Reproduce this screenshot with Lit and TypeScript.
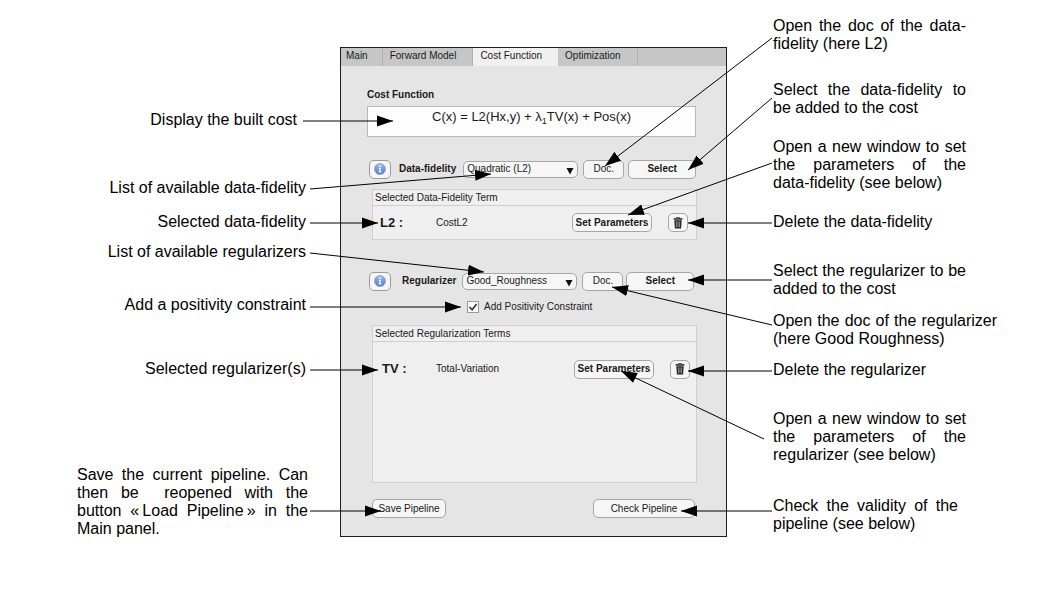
import { LitElement, html, svg, css } from "lit";
import { customElement, property } from "lit/decorators.js";

type Note = { gap: number; kind: string; text: unknown };
type Leader = [number, number, number, number];

const leftNotes: Note[] = [
  { gap: 111, kind: "line inset", text: "Display the built cost" },
  { gap: 50, kind: "line", text: "List of available data-fidelity" },
  { gap: 16, kind: "line", text: "Selected data-fidelity" },
  { gap: 12, kind: "line", text: "List of available regularizers" },
  { gap: 35, kind: "line", text: "Add a positivity constraint" },
  { gap: 46, kind: "line", text: "Selected regularizer(s)" },
  {
    gap: 88,
    kind: "para wide",
    text: "Save the current pipeline. Can then be \u00a0reopened with the button «\u202fLoad Pipeline\u202f» in the Main panel.",
  },
];

const rightNotes: Note[] = [
  { gap: 17, kind: "para", text: "Open the doc of the data-fidelity (here L2)" },
  { gap: 28, kind: "para", text: "Select the data-fidelity to be added to the cost" },
  {
    gap: 21,
    kind: "para",
    text: html`Open a new window to set the parameters of the <span class="whole">data-fidelity</span> (see below)`,
  },
  { gap: 21, kind: "line", text: "Delete the data-fidelity" },
  { gap: 31, kind: "para", text: "Select the regularizer to be added to the cost" },
  { gap: 14, kind: "para medium", text: "Open the doc of the regularizer (here Good Roughness)" },
  { gap: 13, kind: "line", text: "Delete the regularizer" },
  { gap: 31, kind: "para", text: "Open a new window to set the parameters of the regularizer (see below)" },
  { gap: 33, kind: "para slim", text: "Check the validity of the pipeline (see below)" },
];

const leaders: Leader[] = [
  [303, 121, 393, 121],
  [310, 189, 491, 174],
  [310, 223, 378, 223],
  [310, 253, 484, 272],
  [310, 307, 461, 307],
  [310, 370, 378, 370],
  [310, 511, 381, 511],
  [772, 38, 605, 166],
  [772, 98, 688, 170],
  [772, 163, 628, 215],
  [772, 223, 688, 223],
  [772, 280, 688, 280],
  [772, 325, 612, 287],
  [772, 371, 688, 371],
  [764, 439, 621, 371],
  [772, 511, 681, 511],
];

@customElement("callout-notes")
class CalloutNotes extends LitElement {
  @property({ attribute: false }) notes: Note[] = [];

  static styles = css`
    :host {
      display: flex;
      flex-direction: column;
      align-items: var(--notes-align, flex-start);
      font-size: 16px;
      line-height: 18px;
      color: #000;
    }
    .note { margin: 0; }
    .line { padding-right: 2px; }
    .inset { padding-right: 11px; }
    .para { width: 193px; text-align: justify; }
    .wide { width: 231px; }
    .medium { width: 224px; }
    .slim { width: 185px; }
    .whole { white-space: nowrap; }
  `;

  render() {
    return this.notes.map(
      (n) => html`<p class="note ${n.kind}" style="margin-top:${n.gap}px">${n.text}</p>`
    );
  }
}

const infoIcon = svg`<svg width="12" height="12" viewBox="0 0 12 12" aria-hidden="true">
  <defs><linearGradient id="g" x1="0" y1="0" x2="0" y2="1">
    <stop offset="0" stop-color="#9db8ea"/><stop offset="1" stop-color="#4f7bd0"/></linearGradient></defs>
  <circle cx="6" cy="6" r="5.6" fill="url(#g)" stroke="#7c9adb" stroke-width=".6"/>
  <circle cx="6" cy="3.2" r="1" fill="#fff"/>
  <path d="M4.7 5h2v3.6h.7v.9H4.6v-.9h.7V5.9h-.6z" fill="#fff"/></svg>`;

const trashIcon = svg`<svg width="10" height="12" viewBox="0 0 10 12" aria-hidden="true">
  <path d="M3.4 1.2V.4h3.2v.8" fill="none" stroke="#333" stroke-width=".8"/>
  <path d="M.6 1.2h8.8v1.5H.6z" fill="#222"/>
  <path d="M1.3 3.3h7.4L8.1 11.4H1.9z" fill="#222"/>
  <path d="M3.3 4.4l.2 5.8M5 4.4v5.8M6.7 4.4l-.2 5.8" stroke="#bbb" stroke-width=".7" fill="none"/></svg>`;

@customElement("cost-panel")
class CostPanel extends LitElement {
  static styles = css`
    :host {
      display: block;
      box-sizing: border-box;
      height: 100%;
      border: 1px solid #1c1c1c;
      background: #e5e5e5;
      color: #1a1a1a;
      font-size: 10px;
      line-height: 12px;
    }
    * { box-sizing: border-box; }
    .tabs { display: flex; height: 18px; background: #c6c6c6; }
    .tab {
      border: 0;
      border-right: 1px solid #b0b0b0;
      background: none;
      font: inherit;
      color: inherit;
      padding: 0 16px 2px 7px;
      white-space: nowrap;
    }
    .tab.first { padding: 0 14px 2px 5px; }
    .tab.on { padding-right: 15px; background: #f0f0f0; border-right-color: #f0f0f0; }
    .body { display: flex; flex-direction: column; padding: 23px 29px 0 26px; }
    h2 { margin: 0; font-size: 10px; line-height: 12px; }
    .formula {
      display: block;
      height: 31px;
      margin: 5px 1px 0 0;
      padding-top: 3px;
      border: 1px solid #b9b9b9;
      background: #fdfdfd;
      font-size: 13px;
      line-height: 14px;
      text-align: center;
    }
    sub { font-size: 9px; line-height: 0; vertical-align: -3px; }
    .row { display: flex; align-items: center; height: 20px; margin: 22px 1px 0 2px; }
    .row label { font-weight: bold; white-space: nowrap; }
    .btn {
      display: flex;
      align-items: center;
      justify-content: center;
      height: 19px;
      padding: 0;
      border: 1px solid #a6a6a6;
      border-radius: 5px;
      background: #f6f6f6;
      font: inherit;
      color: inherit;
      white-space: nowrap;
    }
    .strong { font-weight: bold; }
    .info { width: 22px; margin-right: 8px; border-color: #9a9a9a; }
    .info.far { margin-right: 11px; }
    .pick { position: relative; display: flex; width: 115px; margin: 0 5px 0 7px; }
    .pick.near { margin: 0 5px 0 6px; }
    select {
      appearance: none;
      width: 100%;
      height: 17px;
      padding: 0 16px 0 3px;
      border: 1px solid #a6a6a6;
      border-radius: 5px;
      background: #f6f6f6;
      font: inherit;
      color: inherit;
    }
    .arrow { position: absolute; right: 4px; top: 6px; pointer-events: none; }
    .doc { width: 41px; margin-right: 4px; }
    .select { flex: 1; }
    .row.second { margin-top: 31px; margin-right: 3px; }
    .second .doc { margin-right: 3px; }
    .terms { margin: 10px 0 0 5px; border: 1px solid #cfcfcf; background: #efefef; }
    .terms h3 {
      margin: 0;
      padding: 2px 2px 1px;
      border-bottom: 1px solid #cfcfcf;
      font-size: 10px;
      font-weight: normal;
      line-height: 12px;
    }
    .term { display: flex; align-items: center; height: 33px; padding: 0 8px 0 7px; }
    .name { width: 56px; font-size: 13px; font-weight: bold; line-height: 16px; }
    .desc { flex: 1; }
    .params { width: 80px; margin-right: 16px; }
    .trash { width: 20px; }
    .check { display: flex; align-items: center; gap: 5px; margin: 10px 0 0 100px; }
    .check input {
      appearance: none;
      width: 12px;
      height: 12px;
      margin: 0;
      border: 1px solid #999;
      background: #fafafa;
    }
    .box { position: relative; display: flex; }
    .box svg { position: absolute; left: 1px; top: 1px; pointer-events: none; }
    .tall { height: 158px; margin-top: 12px; }
    .tall .term { height: 36px; margin-top: 9px; padding: 0 6px 0 9px; }
    .tall .name { width: 54px; }
    .foot { display: flex; justify-content: space-between; margin: 16px 2px 0 5px; }
    .save { width: 74px; }
    .verify { width: 102px; }
  `;

  private pick(id: string, value: string, cls: string) {
    return html`<span class="pick ${cls}">
      <select id=${id}><option selected>${value}</option></select>
      <svg class="arrow" width="8" height="8" viewBox="0 0 8 8"><path d="M.5 1h7L4 7.5z" fill="#111" /></svg>
    </span>`;
  }

  private term(name: string, desc: string) {
    return html`<div class="term">
      <span class="name">${name}</span><span class="desc">${desc}</span>
      <button class="btn strong params">Set Parameters</button>
      <button class="btn trash" aria-label="Delete">${trashIcon}</button>
    </div>`;
  }

  render() {
    return html`
      <nav class="tabs">
        <button class="tab first">Main</button>
        <button class="tab">Forward Model</button>
        <button class="tab on">Cost Function</button>
        <button class="tab">Optimization</button>
      </nav>
      <div class="body">
        <h2>Cost Function</h2>
        <output class="formula">C(x) = L2(Hx,y) + λ<sub>1</sub>TV(x) + Pos(x)</output>
        <div class="row">
          <button class="btn info" aria-label="Info">${infoIcon}</button>
          <label for="fidelity">Data-fidelity</label>
          ${this.pick("fidelity", "Quadratic (L2)", "")}
          <button class="btn doc">Doc.</button>
          <button class="btn strong select">Select</button>
        </div>
        <section class="terms">
          <h3>Selected Data-Fidelity Term</h3>
          ${this.term("L2 :", "CostL2")}
        </section>
        <div class="row second">
          <button class="btn info far" aria-label="Info">${infoIcon}</button>
          <label for="regularizer">Regularizer</label>
          ${this.pick("regularizer", "Good_Roughness", "near")}
          <button class="btn doc">Doc.</button>
          <button class="btn strong select">Select</button>
        </div>
        <div class="check">
          <span class="box"><input id="positivity" type="checkbox" checked />
            <svg width="10" height="10" viewBox="0 0 10 10"><path d="M1.5 5l2.6 2.8L8.6 2" fill="none" stroke="#333" stroke-width="1.6" /></svg></span>
          <label for="positivity">Add Positivity Constraint</label>
        </div>
        <section class="terms tall">
          <h3>Selected Regularization Terms</h3>
          ${this.term("TV :", "Total-Variation")}
        </section>
        <div class="foot">
          <button class="btn save">Save Pipeline</button>
          <button class="btn verify">Check Pipeline</button>
        </div>
      </div>
    `;
  }
}

@customElement("app-root")
class AppRoot extends LitElement {
  static styles = css`
    :host {
      display: block;
      min-height: 100vh;
      background: #fff;
      font-family: "Liberation Sans", Arial, sans-serif;
    }
    .figure {
      display: grid;
      grid-template-columns: 1fr 387px 1fr;
      align-items: start;
      padding-left: 9px;
    }
    .left { --notes-align: flex-end; padding-right: 32px; }
    .right { padding-left: 46px; }
    .stage { position: relative; height: 490px; margin-top: 47px; }
    .leaders {
      position: absolute;
      inset: 0;
      width: 100%;
      height: 100%;
      overflow: visible;
      pointer-events: none;
    }
  `;

  render() {
    return html`<main class="figure">
      <callout-notes class="left" .notes=${leftNotes}></callout-notes>
      <div class="stage">
        <cost-panel></cost-panel>
        <svg class="leaders" viewBox="340 47 387 490" aria-hidden="true">
          <defs>
            <marker id="head" markerUnits="userSpaceOnUse" markerWidth="17" markerHeight="12"
              refX="16" refY="6" orient="auto"><path d="M0 .5L16 6L0 11.5z" fill="#000" /></marker>
          </defs>
          ${leaders.map(
            ([x1, y1, x2, y2]) => svg`<line x1=${x1} y1=${y1} x2=${x2} y2=${y2}
              stroke="#000" stroke-width="1" marker-end="url(#head)"/>`
          )}
        </svg>
      </div>
      <callout-notes class="right" .notes=${rightNotes}></callout-notes>
    </main>`;
  }
}
